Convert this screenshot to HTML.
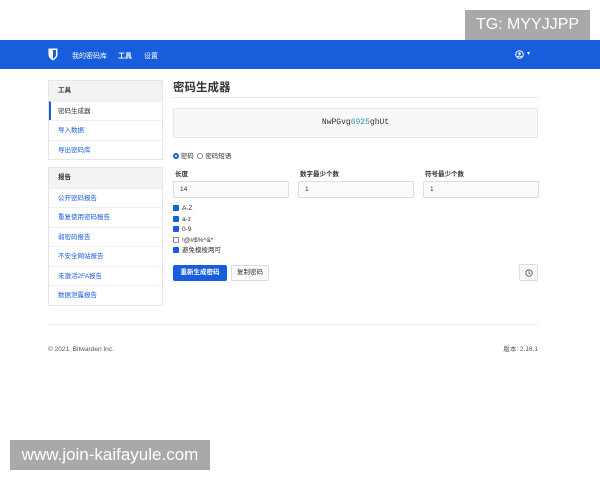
<!DOCTYPE html>
<html><head><meta charset="utf-8"><style>
*{margin:0;padding:0;box-sizing:border-box}
body{width:600px;height:480px;background:#fff;position:relative;overflow:hidden;font-family:"Liberation Sans","Noto Sans CJK SC",sans-serif;color:#333;font-size:7px}
.a{position:absolute}
.nav{left:0;top:40px;width:600px;height:29px;background:#175ddc}
.nav span{position:absolute;top:11px;color:#fff;font-size:7px}
.side{left:48px;width:115px;border:1px solid #e5e5e5;background:#fff}
.side div{height:19.5px;line-height:19px;padding-left:9px;border-top:1px solid #eee;color:#175ddc;font-size:6.5px}
.side div.h{background:#f3f3f3;color:#333;font-weight:bold;border-top:none}
.side div.act{color:#333;border-left:2px solid #175ddc;padding-left:7px}
.inp{height:17px;border:1px solid #ddd;background:#fbfbfb;border-radius:2px;padding-left:6px;line-height:15px;font-size:6.5px}
.lbl{font-weight:bold;font-size:6.5px}
.cb{left:173px;font-size:6.5px;line-height:10.5px}
.cb i{display:inline-block;width:6px;height:6px;background:#175ddc;border-radius:1px;margin-right:3px;vertical-align:-1px}
.cb i.o{background:#fff;border:1px solid #888}
</style></head><body>
<div class="a" style="left:465px;top:10px;width:125px;height:30px;background:#a9a9a9;color:#fff;font-size:16px;line-height:30px;text-align:center">TG: MYYJJPP</div>
<div class="a nav">
<svg class="a" style="left:48px;top:8px" width="10" height="13" viewBox="0 0 10 13"><path d="M0.5 0.5H9.5V7C9.5 10 5 12.5 5 12.5S0.5 10 0.5 7Z" fill="#fff"/><path d="M5 2H8V7C8 9 5 10.8 5 10.8Z" fill="#175ddc"/></svg>
<span style="left:72px">我的密码库</span><span style="left:118px;font-weight:bold">工具</span><span style="left:144px">设置</span>
<svg class="a" style="left:515px;top:10px" width="9" height="9" viewBox="0 0 9 9"><circle cx="4.5" cy="4.5" r="3.8" fill="none" stroke="#fff" stroke-width="1"/><circle cx="4.5" cy="3.6" r="1.3" fill="#fff"/><path d="M2.2 7.2C3 5.8 6 5.8 6.8 7.2" stroke="#fff" fill="none"/></svg>
<span style="left:527px;top:10px;font-size:6px">▾</span>
</div>
<div class="a side" style="top:80px"><div class="h">工具</div><div class="act">密码生成器</div><div>导入数据</div><div>导出密码库</div></div>
<div class="a side" style="top:167px"><div class="h">报告</div><div>公开密码报告</div><div>重复使用密码报告</div><div>弱密码报告</div><div>不安全网站报告</div><div>未激活2FA报告</div><div>数据泄露报告</div></div>
<div class="a" style="left:173px;top:79px;font-size:11.5px;font-weight:bold">密码生成器</div>
<div class="a" style="left:173px;top:97px;width:365px;height:1px;background:#e8e8e8"></div>
<div class="a" style="left:173px;top:108px;width:365px;height:30px;background:#f8f8f8;border:1px solid #e6e6e6;border-radius:2px;text-align:center;line-height:28px;font-family:'Liberation Mono',monospace;font-size:8px">NwPGvg<span style="color:#2f8fbf">6925</span>ghUt</div>
<div class="a" style="left:173px;top:150px;font-size:6.5px"><span style="display:inline-block;width:6px;height:6px;border-radius:50%;border:2px solid #175ddc;vertical-align:-1px"></span> 密码 &nbsp;<span style="display:inline-block;width:6px;height:6px;border-radius:50%;border:1px solid #888;vertical-align:-1px"></span> 密码短语</div>
<div class="a lbl" style="left:175px;top:168px">长度</div>
<div class="a lbl" style="left:300px;top:168px">数字最少个数</div>
<div class="a lbl" style="left:425px;top:168px">符号最少个数</div>
<div class="a inp" style="left:173px;top:181px;width:116px">14</div>
<div class="a inp" style="left:298px;top:181px;width:116px">1</div>
<div class="a inp" style="left:423px;top:181px;width:116px">1</div>
<div class="a cb" style="top:204px"><i></i>A-Z<br><i></i>a-z<br><i></i>0-9<br><i class="o"></i>!@#$%^&amp;*<br><i></i>避免模棱两可</div>
<div class="a" style="left:173px;top:265px;width:54px;height:16px;background:#175ddc;border-radius:2px;color:#fff;font-weight:bold;font-size:6.5px;text-align:center;line-height:16px">重新生成密码</div>
<div class="a" style="left:231px;top:265px;width:38px;height:16px;border:1px solid #ddd;border-radius:2px;background:#fafafa;font-size:6.5px;text-align:center;line-height:14px">复制密码</div>
<div class="a" style="left:519px;top:264px;width:19px;height:17px;border:1px solid #ddd;border-radius:2px;background:#fafafa"><svg style="position:absolute;left:5px;top:4px" width="8" height="8" viewBox="0 0 8 8"><circle cx="4" cy="4" r="3.2" fill="none" stroke="#555" stroke-width="0.9"/><path d="M4 2V4L5.3 5" stroke="#555" stroke-width="0.8" fill="none"/></svg></div>
<div class="a" style="left:48px;top:324px;width:490px;height:1px;background:#eee"></div>
<div class="a" style="left:48px;top:346px;font-size:6.5px;line-height:8px;color:#555">© 2021, Bitwarden Inc.</div>
<div class="a" style="left:438px;width:100px;text-align:right;top:346px;font-size:6.5px;line-height:8px;color:#555">版本: 2.16.1</div>
<div class="a" style="left:10px;top:440px;width:200px;height:30px;background:#a9a9a9;color:#fff;font-size:17px;line-height:30px;text-align:center">www.join-kaifayule.com</div>
</body></html>
